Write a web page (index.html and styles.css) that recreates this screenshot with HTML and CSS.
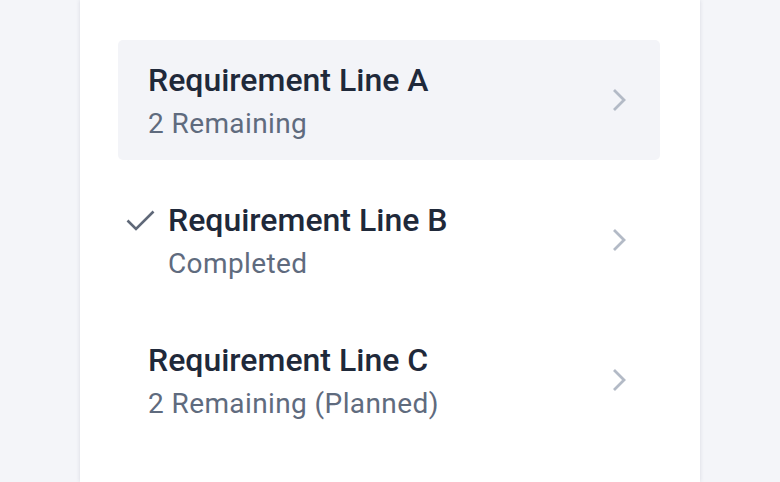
FILE: index.html
```html
<!DOCTYPE html>
<html>
<head>
<meta charset="utf-8">
<link rel="stylesheet" href="styles.css">
</head>
<body>
<div class="card">
  <div class="item active">
    <div class="text">
      <div class="title">Requirement Line A</div>
      <div class="sub">2 Remaining</div>
    </div>
    <svg class="chev" width="14" height="24" viewBox="0 0 14 24"><path d="M2 2l10 10-10 10" fill="none" stroke="#b3bac6" stroke-width="2.8"/></svg>
  </div>
  <div class="item">
    <svg class="check" width="30" height="24" viewBox="0 0 30 24"><path d="M1.5 11.5L10 20L27.5 2.5" fill="none" stroke="#5f6878" stroke-width="2.6"/></svg>
    <div class="text">
      <div class="title">Requirement Line B</div>
      <div class="sub">Completed</div>
    </div>
    <svg class="chev" width="14" height="24" viewBox="0 0 14 24"><path d="M2 2l10 10-10 10" fill="none" stroke="#b3bac6" stroke-width="2.8"/></svg>
  </div>
  <div class="item">
    <div class="text">
      <div class="title">Requirement Line C</div>
      <div class="sub">2 Remaining (Planned)</div>
    </div>
    <svg class="chev" width="14" height="24" viewBox="0 0 14 24"><path d="M2 2l10 10-10 10" fill="none" stroke="#b3bac6" stroke-width="2.8"/></svg>
  </div>
</div>
</body>
</html>
```
FILE: styles.css
```css
html, body {
  margin: 0;
  padding: 0;
  background: #f4f5f9;
  font-family: Roboto, "Liberation Sans", sans-serif;
}
.card {
  width: 620px;
  height: 482px;
  margin-left: 80px;
  background: #ffffff;
  box-shadow: 0 0 4px rgba(40, 50, 80, 0.14);
  box-sizing: border-box;
  padding: 40px 40px 0 38px;
  display: flex;
  flex-direction: column;
  gap: 20px;
}
.item {
  height: 120px;
  border-radius: 5px;
  padding: 0 34px 0 30px;
  display: flex;
  align-items: center;
  position: relative;
  flex: none;
}
.item.active {
  background: #f3f4f8;
}
.text {
  flex: 1;
  display: flex;
  flex-direction: column;
  gap: 8px;
  margin-top: 4px;
}
.title {
  font-size: 32px;
  font-weight: 500;
  color: #1f293a;
  line-height: 36px;
}
.sub {
  font-size: 28px;
  letter-spacing: 0.4px;
  color: #5f6b7e;
  line-height: 36px;
}
.check {
  position: absolute;
  left: 8px;
  top: 29px;
}
.item .check + .text {
  padding-left: 20px;
}
.chev {
  flex: none;
}
```
